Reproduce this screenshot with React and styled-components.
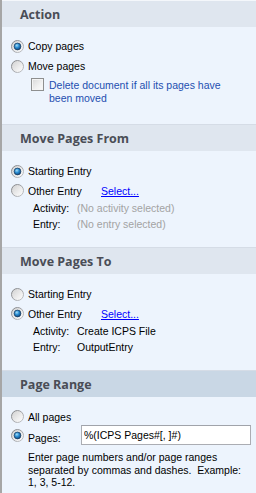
import React from "react";
import styled, { createGlobalStyle } from "styled-components";

const GlobalStyle = createGlobalStyle`
  html, body {
    margin: 0;
    padding: 0;
    background: #edf4fd;
  }
  body {
    width: 256px;
    height: 493px;
    overflow: hidden;
    font-family: "Liberation Sans", Arial, sans-serif;
    font-size: 10.5px;
    color: #000;
  }
`;

const Pane = styled.div`
  width: 256px;
  height: 493px;
  box-sizing: border-box;
  border-left: 2px solid #a6a6a6;
  background: #edf4fd;
  display: flex;
  flex-direction: column;
  overflow: hidden;
`;

const Section = styled.section`
  display: flex;
  flex-direction: column;
  border-top: 1px solid ${(p) => (p.$first ? "#f4f7fb" : "#d5dce6")};
`;

const Header = styled.div`
  height: 26px;
  display: flex;
  align-items: center;
  padding-left: 18px;
  background: ${(p) => (p.$active ? "#c9d7e5" : "#dfe6ef")};
  font-family: "Open Sans", "Liberation Sans", sans-serif;
  font-weight: 700;
  font-size: 12.5px;
  color: #4a4d56;
`;

const Body = styled.div`
  height: ${(p) => p.$h}px;
  box-sizing: border-box;
  padding: ${(p) => p.$pt}px 5px 0 9px;
  display: flex;
  flex-direction: column;
`;

const OptionRow = styled.label`
  display: flex;
  align-items: center;
  height: ${(p) => p.$h || 20}px;
  gap: 4px;
`;

const OptionText = styled.span`
  display: inline-block;
  width: ${(p) => (p.$w ? `${p.$w}px` : "auto")};
  white-space: nowrap;
`;

const Link = styled.a`
  color: #0000ff;
  text-decoration: underline;
  cursor: pointer;
`;

const CheckRow = styled.label`
  display: flex;
  align-items: flex-start;
  gap: 5px;
  margin-top: 2px;
  margin-left: 20px;
`;

const CheckBox = styled.span`
  flex: none;
  width: 13px;
  height: 13px;
  box-sizing: border-box;
  border: 1px solid #8e8f8f;
  background: linear-gradient(135deg, #d8d8d8 0%, #f1f1f1 60%, #fbfbfb 100%);
  box-shadow: inset 0 0 0 1px #f4f4f4;
`;

const CheckText = styled.span`
  color: #1d4fb0;
  line-height: 13px;
  margin-top: 0.5px;
`;

const InfoGrid = styled.div`
  display: grid;
  grid-template-columns: 44px 1fr;
  grid-auto-rows: 16px;
  align-items: center;
  margin-left: 22px;
`;

const InfoLabel = styled.span`
  white-space: nowrap;
`;

const InfoValue = styled.span`
  white-space: nowrap;
  color: ${(p) => (p.$muted ? "#a3a3a3" : "#000")};
`;

const PagesRow = styled.div`
  display: flex;
  align-items: center;
  height: 20px;
  gap: 4px;
`;

const PagesLabel = styled.span`
  width: 49px;
  align-self: flex-end;
  line-height: 14px;
`;

const TextInput = styled.input`
  width: 170px;
  height: 20px;
  box-sizing: border-box;
  border: 1px solid #abadb3;
  border-top-color: #a0a3aa;
  background: #fff;
  padding: 0 2px;
  margin: 0;
  font-family: "Liberation Sans", Arial, sans-serif;
  font-size: 10.5px;
  color: #000;
  outline: none;
`;

const Help = styled.p`
  margin: 6px 0 0 17px;
  line-height: 12.5px;
  white-space: pre;
`;

const RadioIcon = ({ checked }) => (
  <svg width="13" height="13" viewBox="0 0 13 13" style={{ flex: "none" }}>
    <defs>
      <linearGradient id="rg-ring" x1="0" y1="0" x2="1" y2="1">
        <stop offset="0" stopColor="#7e8084" />
        <stop offset="1" stopColor="#c4c6c9" />
      </linearGradient>
      <linearGradient id="rg-fill" x1="0" y1="0" x2="1" y2="1">
        <stop offset="0" stopColor="#cfcfcf" />
        <stop offset="0.6" stopColor="#eeeeee" />
        <stop offset="1" stopColor="#ffffff" />
      </linearGradient>
      <radialGradient id="rg-dot" cx="0.4" cy="0.35" r="0.7">
        <stop offset="0" stopColor="#a6def8" />
        <stop offset="0.45" stopColor="#2a8ed3" />
        <stop offset="1" stopColor="#0c3d74" />
      </radialGradient>
    </defs>
    <circle cx="6.5" cy="6.5" r="6" fill="url(#rg-fill)" stroke="url(#rg-ring)" strokeWidth="1" />
    {checked && (
      <circle cx="6.5" cy="6.5" r="3.4" fill="url(#rg-dot)" stroke="#18395c" strokeWidth="0.7" />
    )}
  </svg>
);

const Option = ({ checked, children, h, w }) => (
  <OptionRow $h={h}>
    <RadioIcon checked={checked} />
    <OptionText $w={w}>{children}</OptionText>
  </OptionRow>
);

export default function App() {
  return (
    <>
      <GlobalStyle />
      <Pane>
        <Section $first>
          <Header>Action</Header>
          <Body $h={97} $pt={9}>
            <Option checked>Copy pages</Option>
            <Option>Move pages</Option>
            <CheckRow>
              <CheckBox />
              <CheckText>
                Delete document if all its pages have
                <br />
                been moved
              </CheckText>
            </CheckRow>
          </Body>
        </Section>

        <Section>
          <Header>Move Pages From</Header>
          <Body $h={96} $pt={10}>
            <Option checked>Starting Entry</Option>
            <OptionRow $h={19}>
              <RadioIcon />
              <OptionText $w={69}>Other Entry</OptionText>
              <Link>Select...</Link>
            </OptionRow>
            <InfoGrid>
              <InfoLabel>Activity:</InfoLabel>
              <InfoValue $muted>(No activity selected)</InfoValue>
              <InfoLabel>Entry:</InfoLabel>
              <InfoValue $muted>(No entry selected)</InfoValue>
            </InfoGrid>
          </Body>
        </Section>

        <Section>
          <Header>Move Pages To</Header>
          <Body $h={96} $pt={10}>
            <Option>Starting Entry</Option>
            <OptionRow $h={19}>
              <RadioIcon checked />
              <OptionText $w={69}>Other Entry</OptionText>
              <Link>Select...</Link>
            </OptionRow>
            <InfoGrid>
              <InfoLabel>Activity:</InfoLabel>
              <InfoValue>Create ICPS File</InfoValue>
              <InfoLabel>Entry:</InfoLabel>
              <InfoValue>OutputEntry</InfoValue>
            </InfoGrid>
          </Body>
        </Section>

        <Section>
          <Header $active>Page Range</Header>
          <Body $h={96} $pt={11}>
            <Option h={17}>All pages</Option>
            <PagesRow>
              <RadioIcon checked />
              <PagesLabel>Pages:</PagesLabel>
              <TextInput readOnly value="%(ICPS Pages#[, ]#)" />
            </PagesRow>
            <Help>
              {"Enter page numbers and/or page ranges\nseparated by commas and dashes.  Example:\n1, 3, 5-12."}
            </Help>
          </Body>
        </Section>
      </Pane>
    </>
  );
}
